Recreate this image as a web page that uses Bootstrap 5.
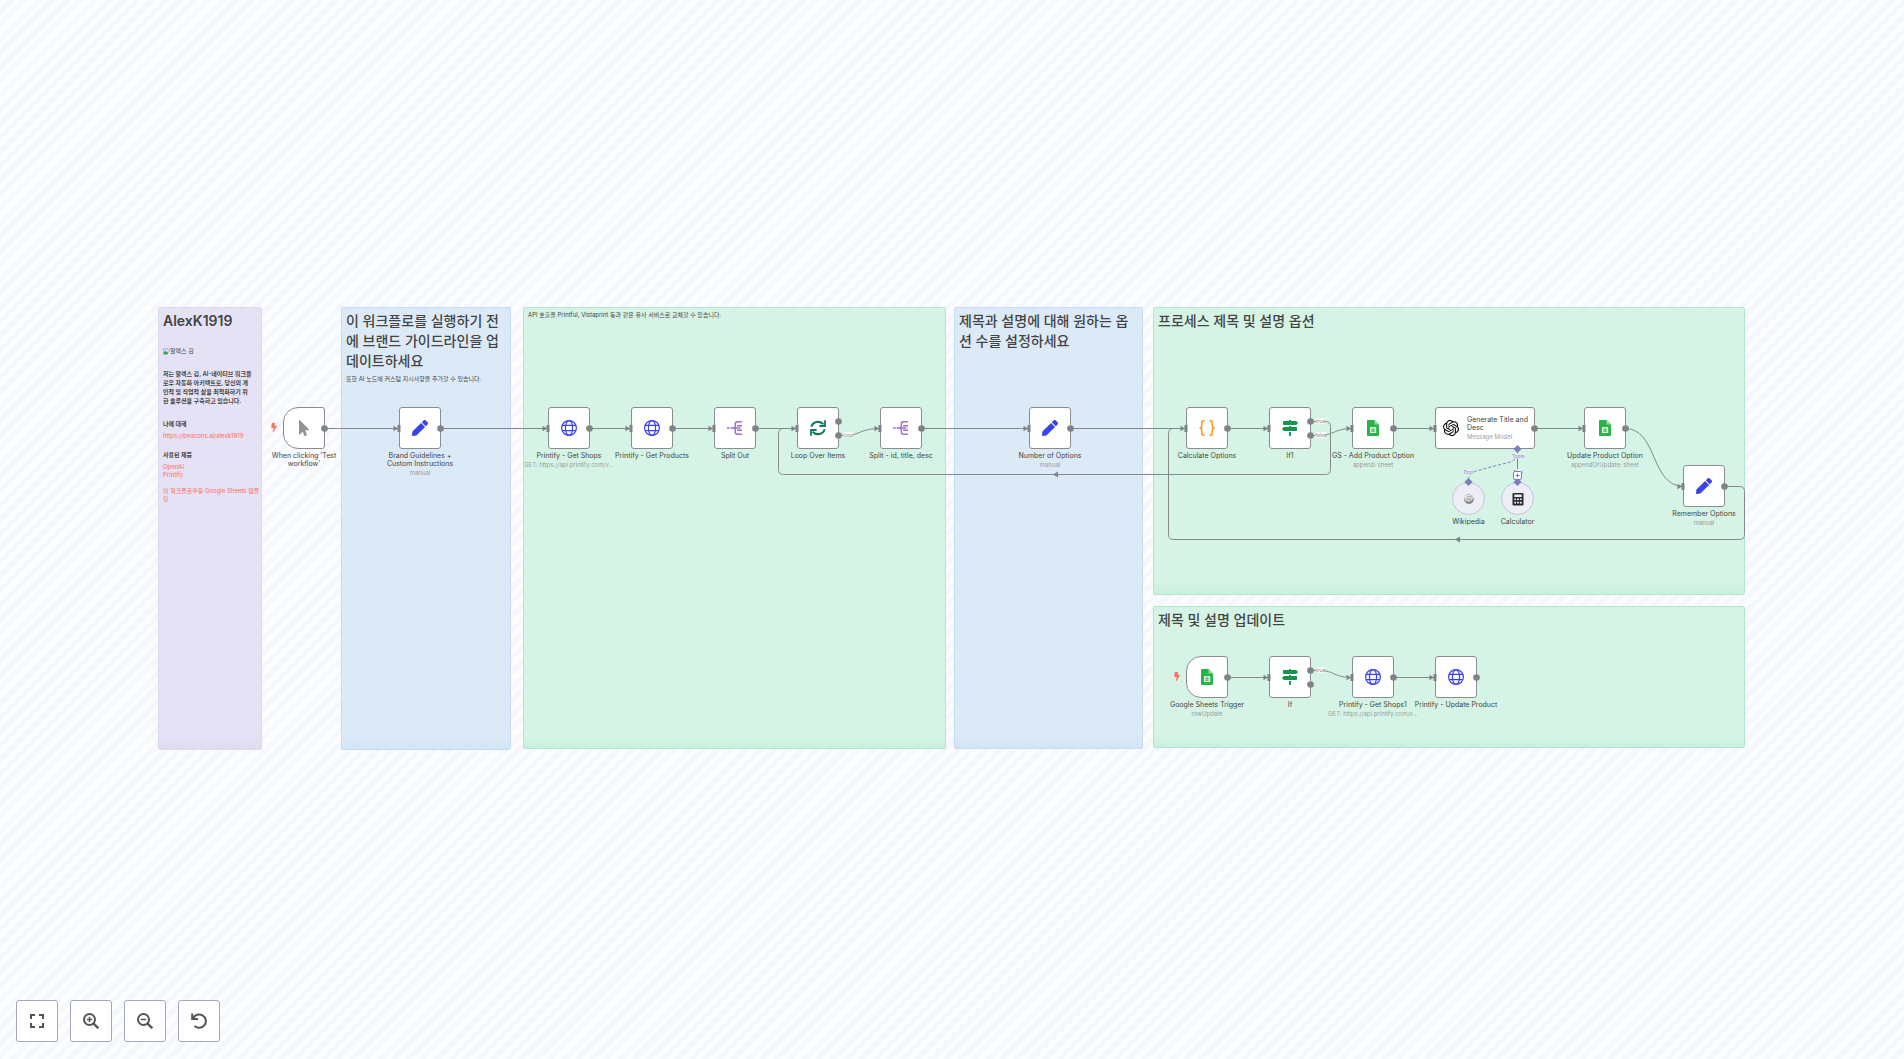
<!DOCTYPE html>
<html lang="ko">
<head>
<meta charset="utf-8">
<meta name="viewport" content="width=device-width, initial-scale=1">
<title>Workflow</title>
<link href="https://cdn.jsdelivr.net/npm/bootstrap@5.3.0/dist/css/bootstrap.min.css" rel="stylesheet">
<style>
body{font-family:Inter,"Noto Sans CJK KR",sans-serif;color:#444;background:repeating-linear-gradient(135deg,#fcfdff 0 5px,#f6f7fc 5px 10px)}
.flow-stage{width:1588px;height:445px}
.flow-wires{inset:0;overflow:visible}
.sticky{border:1px solid;border-radius:2px;padding:3px 4px;word-break:break-all;font-size:6px;line-height:8px}
.sticky-violet{background:linear-gradient(#e5e2f5 calc(100% - 12px),#dfdbf1);border-color:#dcd9f2}
.sticky-blue{background:linear-gradient(#dceaf7 calc(100% - 12px),#d2e4f6);border-color:#c4dcf5}
.sticky-green{background:linear-gradient(#d6f4e5 calc(100% - 12px),#c9f0dc);border-color:#aee8ca}
.sticky h1{font-size:14px;line-height:20px;font-weight:500;margin:0}
.sticky .latin-title{font-weight:600}
.sticky h2{font-size:6px;line-height:9px;font-weight:600;margin:0;white-space:nowrap}
.sticky .about-block{margin-top:14px}
.sticky .product-block{margin-top:10px}
.sticky p{margin:0}
.sticky a{color:#ff6d5a;text-decoration:none;white-space:nowrap}
.flow-node{width:42px}
.node-box{width:42px;height:42px;background:#fff;border:1px solid #8a8c93;border-radius:3px}
.node-start{border-radius:15px 3px 3px 15px}
.node-wide{width:100px;padding-left:7px;gap:8px}
.tool-circle{width:33px;height:33px;border-radius:50%;background:#ededf5;border:1px solid #c3c4dd}
.node-name{font-size:7px;line-height:8px;font-weight:400;margin-top:3px;white-space:nowrap}
.node-sub{font-size:6px;line-height:9px;color:#999da3;white-space:nowrap}
.ic{width:16px;height:16px;display:block}
.bolt{width:6px;height:9px;left:-12px;top:16px;fill:#ff6d5a}
.port-tag{font-size:5px;line-height:5px;color:#888;background:#fff;transform:translate(-50%,-50%)}
.port-tool{color:#7d7fbd;background:#ecf3f5}
.add-tool{width:9px;height:9px;border:1px solid #7d7fbd;border-radius:2px;background:#fff;color:#7d7fbd}
.tool-btn{width:42px;height:42px;background:#fff;border:1px solid #a3a7bb;border-radius:3px}
.tool-btn svg{width:16px;height:16px}
.flow-tools{gap:12px;left:16px;bottom:17px}
</style>
</head>
<body>
<svg width="0" height="0" class="position-absolute" aria-hidden="true">
<symbol id="i-pen" viewBox="0 0 512 512"><path fill="#3a42e9" d="M290.74 93.24l128.02 128.02-277.99 277.99-114.14 12.6C11.35 513.54-1.56 500.62.14 485.34l12.7-114.22 277.9-277.88zm207.2-19.06l-60.11-60.11c-18.75-18.75-49.16-18.75-67.91 0l-56.55 56.55 128.02 128.02 56.55-56.55c18.75-18.76 18.75-49.16 0-67.91z"/></symbol>
<symbol id="i-pointer" viewBox="-96 0 512 512"><path fill="#909298" d="M302.189 329.126H196.105l55.831 135.993c3.889 9.428-.555 19.999-9.444 23.999l-49.165 21.427c-9.165 4-19.443-.571-23.332-9.714l-53.053-129.136-86.664 89.138C18.729 472.71 0 463.554 0 447.977V18.299C0 1.899 19.921-6.096 30.277 5.443l284.412 292.542c11.472 11.179 3.007 31.141-12.5 31.141z"/></symbol>
<symbol id="i-globe" viewBox="0 0 16 16"><g fill="none" stroke="#3a42e9" stroke-width="1.2"><circle cx="8" cy="8" r="7.4"/><ellipse cx="8" cy="8" rx="3.6" ry="7.4"/><path d="M1 5.4h14M1 10.6h14"/></g></symbol>
<symbol id="i-split" viewBox="0 0 16 16"><g fill="none" stroke="#9b6dd5" stroke-width="1.4"><path d="M0 8h2.6M3.6 8H7M15 1.7h-4.5Q8.300 1.700 8.300 4v1.700Q8.300 8 6.500 8Q8.300 8 8.300 10.300V12q0 2.300 2.200 2.300H15M10 5.800h5M10 10.200h5M8 8h5.500"/></g></symbol>
<symbol id="i-sync" viewBox="0 0 16 16"><g fill="none" stroke="#127862" stroke-width="2.100"><path d="M1.300 6.800A7 6.600 0 0 1 13.400 4.200M14.700 9.200A7 6.600 0 0 1 2.600 11.800"/><path d="M15 .3V6H9.400M1 15.700V10H6.600" stroke-width="1.800"/></g></symbol>
<symbol id="i-signs" viewBox="0 0 512 512"><path fill="#159450" d="M507.310 84.690L464 41.370c-6-6-14.140-9.370-22.630-9.370H288V16c0-8.840-7.160-16-16-16h-32c-8.840 0-16 7.160-16 16v16H56c-13.250 0-24 10.750-24 24v80c0 13.250 10.750 24 24 24h385.370c8.490 0 16.620-3.370 22.630-9.370l43.310-43.310c6.250-6.260 6.250-16.380 0-22.630zM224 496c0 8.840 7.160 16 16 16h32c8.840 0 16-7.160 16-16V384h-64v112zm232-272H288v-32h-64v32H70.630c-8.490 0-16.620 3.370-22.630 9.370L4.690 276.690c-6.250 6.250-6.250 16.380 0 22.630L48 342.630c6 6 14.140 9.370 22.630 9.370H456c13.250 0 24-10.750 24-24v-80c0-13.250-10.750-24-24-24z"/></symbol>
<symbol id="i-braces" viewBox="0 0 16 16"><path fill="none" stroke="#ff9922" stroke-width="1.600" d="M5.500.9H4.600Q2.700.9 2.700 2.800V5.800Q2.700 8 .5 8Q2.700 8 2.700 10.200V13.200Q2.700 15.100 4.600 15.100H5.500M10.500.9H11.400Q13.300.9 13.300 2.800V5.800Q13.300 8 15.500 8Q13.300 8 13.300 10.200V13.200Q13.300 15.100 11.400 15.100H10.500"/></symbol>
<symbol id="i-sheet" viewBox="0 0 16 16"><path fill="#28b446" d="M3 0h6.500L14 4.500V15q0 1-1 1H3q-1 0-1-1V1q0-1 1-1z"/><path fill="#8fdc9f" d="M9.500 0L14 4.500H9.500z"/><path fill="#e9f9ec" d="M5 7.200h6.200v5.800H5z"/><path stroke="#28b446" stroke-width=".8" d="M6 9.300h4.200M6 11.200h4.200M8.100 8v4.200"/></symbol>
<symbol id="i-openai" viewBox="0 0 24 24"><path d="M22.2819 9.8211a5.9847 5.9847 0 0 0-.5157-4.9108 6.0462 6.0462 0 0 0-6.5098-2.9A6.0651 6.0651 0 0 0 4.9807 4.1818a5.9847 5.9847 0 0 0-3.9977 2.9 6.0462 6.0462 0 0 0 .7427 7.0966 5.98 5.98 0 0 0 .511 4.9107 6.051 6.051 0 0 0 6.5146 2.9001A5.9847 5.9847 0 0 0 13.2599 24a6.0557 6.0557 0 0 0 5.7718-4.2058 5.9894 5.9894 0 0 0 3.9977-2.9001 6.0557 6.0557 0 0 0-.7475-7.0729zm-9.022 12.6081a4.4755 4.4755 0 0 1-2.8764-1.0408l.1419-.0804 4.7783-2.7582a.7948.7948 0 0 0 .3927-.6813v-6.7369l2.02 1.1686a.071.071 0 0 1 .038.052v5.5826a4.504 4.504 0 0 1-4.4945 4.4944zm-9.6607-4.1254a4.4708 4.4708 0 0 1-.5346-3.0137l.142.0852 4.783 2.7582a.7712.7712 0 0 0 .7806 0l5.8428-3.3685v2.3324a.0804.0804 0 0 1-.0332.0615L9.74 19.9502a4.4992 4.4992 0 0 1-6.1408-1.6464zM2.3408 7.8956a4.485 4.485 0 0 1 2.3655-1.9728V11.6a.7664.7664 0 0 0 .3879.6765l5.8144 3.3543-2.0201 1.1685a.0757.0757 0 0 1-.071 0l-4.8303-2.7865A4.504 4.504 0 0 1 2.3408 7.872zm16.5963 3.8558L13.1038 8.364 15.1192 7.2a.0757.0757 0 0 1 .071 0l4.8303 2.7913a4.4944 4.4944 0 0 1-.6765 8.1042v-5.6772a.79.79 0 0 0-.407-.667zm2.0107-3.0231l-.142-.0852-4.7735-2.7818a.7759.7759 0 0 0-.7854 0L9.409 9.2297V6.8974a.0662.0662 0 0 1 .0284-.0615l4.8303-2.7866a4.4992 4.4992 0 0 1 6.6802 4.66zM8.3065 12.863l-2.02-1.1638a.0804.0804 0 0 1-.038-.0567V6.0742a4.4992 4.4992 0 0 1 7.3757-3.4537l-.142.0805L8.704 5.459a.7948.7948 0 0 0-.3927.6813zm1.0976-2.3654l2.602-1.4998 2.6069 1.4998v2.9994l-2.5974 1.4997-2.6067-1.4997Z"/></symbol>
<symbol id="i-wiki" viewBox="0 0 16 16"><circle cx="8" cy="8" r="5" fill="#d4d4d4"/><path d="M3 7.500Q5 11 8 10.500Q11.500 10 12.500 6Q13.500 9.500 11 12Q8 14 5 12Q3 10 3 7.500z" fill="#8d8d8d"/><path d="M4.500 4.500l2 1.500 1-2.500 2 2.500 1.500-1.500M6 9l2-1.500L10 9" fill="none" stroke="#777" stroke-width=".6"/><path d="M4 6q2-2 5-1.500" fill="none" stroke="#fff" stroke-width=".8"/></symbol>
<symbol id="i-calc" viewBox="0 0 16 16"><rect x="2.500" y="2" width="11" height="12.400" rx="1.200" fill="#2b2b2f"/><path fill="#ededf5" d="M4.300 3.500h7.400v2.500H4.300zM4.300 7.500h1.800V9H4.300zM7.100 7.500h1.800V9H7.100zM9.900 7.500h1.800V9H9.900zM4.300 10.800h1.800v1.700H4.300zM7.100 10.800h1.800v1.700H7.100zM9.900 10.800h1.800v1.700H9.900z"/></symbol>
<symbol id="i-bolt" viewBox="0 0 320 512"><path d="M296 160H180.600l42.600-129.800C227.200 15 215.700 0 200 0H56C44 0 33.800 8.900 32.200 20.800l-32 240C-1.700 275.200 9.500 288 24 288h118.700L96.600 482.500c-3.600 15.200 8 29.500 23.300 29.500 8.400 0 16.400-4.400 20.800-12l176-304c9.300-15.900-2.200-36-20.700-36z"/></symbol>
<symbol id="p-in" viewBox="0 0 8 8" overflow="visible"><path fill="#7f8287" d="M-.5 1.200L4 4L-.5 6.800zM3.500 .5h3v7h-3z"/></symbol>
</svg>

<main class="min-vh-100 d-flex align-items-center justify-content-center overflow-hidden">
<div class="flow-stage position-relative flex-shrink-0">

<section class="sticky sticky-violet position-absolute" style="left:0;top:0;width:104px;height:443px">
<h1 class="latin-title">AlexK1919</h1>
<p class="d-flex align-items-center mt-3"><svg width="7" height="7" viewBox="0 0 16 16" role="img" aria-label="알렉스 김"><path fill="#c5d8f0" stroke="#888" d="M1 1h10l4 4v10H1z"/><path fill="#3fa346" d="M2 14V10l4-3 3 3 2-1 3 5z"/><path fill="#fff" d="M9 16l7-7v7z"/></svg><span>알렉스 김</span></p>
<h2 class="about-block">저는 알렉스 김, AI-네이티브 워크플<br>로우 자동화 아키텍트로, 당신의 개<br>인적 및 직업적 삶을 최적화하기 위<br>한 솔루션을 구축하고 있습니다.</h2>
<h2 class="about-block">나에 대해</h2>
<p class="mt-1"><a href="https://beacons.ai/alexk1919">https://beacons.ai/alexk1919</a></p>
<h2 class="product-block">사용된 제품</h2>
<p class="mt-1"><a href="#">OpenAI</a><br><a href="#">Printify</a></p>
<p class="mt-2"><a href="#">이 워크플로우용 Google Sheets 템플<br>릿</a></p>
</section>
<section class="sticky sticky-blue position-absolute" style="left:183px;top:0;width:170px;height:443px">
<h1>이 워크플로를 실행하기 전에 브랜드 가이드라인을 업데이트하세요</h1>
<p class="mt-1">또한 AI 노드에 커스텀 지시사항을 추가할 수 있습니다.</p>
</section>
<section class="sticky sticky-green position-absolute" style="left:365px;top:0;width:423px;height:442px">
<p>API 호출을 Printful, Vistaprint 등과 같은 유사 서비스로 교체할 수 있습니다.</p>
</section>
<section class="sticky sticky-blue position-absolute" style="left:796px;top:0;width:189px;height:442px">
<h1>제목과 설명에 대해 원하는 옵션 수를 설정하세요</h1>
</section>
<section class="sticky sticky-green position-absolute" style="left:995px;top:0;width:592px;height:288px">
<h1>프로세스 제목 및 설명 옵션</h1>
</section>
<section class="sticky sticky-green position-absolute" style="left:995px;top:299px;width:592px;height:142px">
<h1>제목 및 설명 업데이트</h1>
</section>

<svg class="flow-wires position-absolute" width="1588" height="445" viewBox="0 0 1588 445" aria-hidden="true">
<g fill="none" stroke="#85898d" stroke-width="1">
<path d="M166 121.500H241M282 121.500H390M431 121.500H473M514 121.500H556M597 121.500H639M763 121.500H871M912 121.500H1028M1069 121.500H1111M1235 121.500H1277M1377 121.500H1426"/>
<path d="M680 128.500H686C702 128.500 702 121.500 722 121.500M1152 128.500H1162C1176 128.500 1176 121.500 1194 121.500"/>
<path d="M1152 114.500H1167.500Q1172.500 114.500 1172.500 119.500V162.500Q1172.500 167.500 1167.500 167.500H625.500Q620.500 167.500 620.500 162.500V126.500Q620.500 121.500 625.500 121.500H639"/>
<path d="M1467 121.500C1500 121.500 1492 179.500 1526 179.500"/>
<path d="M1567 179.500H1581.500Q1586.500 179.500 1586.500 184.500V227.500Q1586.500 232.500 1581.500 232.500H1015.500Q1010.500 232.500 1010.500 227.500V126.500Q1010.500 121.500 1015.500 121.500H1028"/>
<path d="M1069 370.500H1111M1235 370.500H1277M1152 363.500H1162C1176 363.500 1176 370.500 1194 370.500"/>
</g>
<g fill="#7f8287"><path d="M900 164.500v6l-5-3zM1302 229.500v6l-5-3z"/></g>
<g fill="none" stroke="#7d7fbd" stroke-width="1"><path stroke-dasharray="3 2" d="M1359.500 143V148Q1359 152 1352 155L1318 164Q1310 167 1310 175"/><path d="M1359.500 143V175"/></g>
</svg>

<div class="flow-node position-absolute" style="left:125px;top:100px"><svg class="bolt position-absolute"><use href="#i-bolt"/></svg><div class="node-box node-start d-flex align-items-center justify-content-center"><svg class="ic"><use href="#i-pointer"/></svg></div><div class="d-flex flex-column align-items-center text-center"><div class="node-name">When clicking ‘Test<br>workflow’</div></div></div>
<div class="flow-node position-absolute" style="left:241px;top:100px"><div class="node-box d-flex align-items-center justify-content-center"><svg class="ic"><use href="#i-pen"/></svg></div><div class="d-flex flex-column align-items-center text-center"><div class="node-name">Brand Guidelines +<br>Custom Instructions</div><div class="node-sub">manual</div></div></div>
<div class="flow-node position-absolute" style="left:390px;top:100px"><div class="node-box d-flex align-items-center justify-content-center"><svg class="ic"><use href="#i-globe"/></svg></div><div class="d-flex flex-column align-items-center text-center"><div class="node-name">Printify - Get Shops</div><div class="node-sub">GET: https://api.printify.com/v...</div></div></div>
<div class="flow-node position-absolute" style="left:473px;top:100px"><div class="node-box d-flex align-items-center justify-content-center"><svg class="ic"><use href="#i-globe"/></svg></div><div class="d-flex flex-column align-items-center text-center"><div class="node-name">Printify - Get Products</div></div></div>
<div class="flow-node position-absolute" style="left:556px;top:100px"><div class="node-box d-flex align-items-center justify-content-center"><svg class="ic"><use href="#i-split"/></svg></div><div class="d-flex flex-column align-items-center text-center"><div class="node-name">Split Out</div></div></div>
<div class="flow-node position-absolute" style="left:639px;top:100px"><div class="node-box d-flex align-items-center justify-content-center"><svg class="ic"><use href="#i-sync"/></svg></div><div class="d-flex flex-column align-items-center text-center"><div class="node-name">Loop Over Items</div></div></div>
<div class="flow-node position-absolute" style="left:722px;top:100px"><div class="node-box d-flex align-items-center justify-content-center"><svg class="ic"><use href="#i-split"/></svg></div><div class="d-flex flex-column align-items-center text-center"><div class="node-name">Split - id, title, desc</div></div></div>
<div class="flow-node position-absolute" style="left:871px;top:100px"><div class="node-box d-flex align-items-center justify-content-center"><svg class="ic"><use href="#i-pen"/></svg></div><div class="d-flex flex-column align-items-center text-center"><div class="node-name">Number of Options</div><div class="node-sub">manual</div></div></div>
<div class="flow-node position-absolute" style="left:1028px;top:100px"><div class="node-box d-flex align-items-center justify-content-center"><svg class="ic"><use href="#i-braces"/></svg></div><div class="d-flex flex-column align-items-center text-center"><div class="node-name">Calculate Options</div></div></div>
<div class="flow-node position-absolute" style="left:1111px;top:100px"><div class="node-box d-flex align-items-center justify-content-center"><svg class="ic"><use href="#i-signs"/></svg></div><div class="d-flex flex-column align-items-center text-center"><div class="node-name">If1</div></div></div>
<div class="flow-node position-absolute" style="left:1194px;top:100px"><div class="node-box d-flex align-items-center justify-content-center"><svg class="ic"><use href="#i-sheet"/></svg></div><div class="d-flex flex-column align-items-center text-center"><div class="node-name">GS - Add Product Option</div><div class="node-sub">append: sheet</div></div></div>
<div class="node-box node-wide position-absolute d-flex align-items-center" style="left:1277px;top:100px"><svg class="ic flex-shrink-0"><use href="#i-openai"/></svg><div><div class="node-name mt-0">Generate Title and<br>Desc</div><div class="node-sub">Message Model</div></div></div>
<div class="flow-node position-absolute" style="left:1426px;top:100px"><div class="node-box d-flex align-items-center justify-content-center"><svg class="ic"><use href="#i-sheet"/></svg></div><div class="d-flex flex-column align-items-center text-center"><div class="node-name">Update Product Option</div><div class="node-sub">appendOrUpdate: sheet</div></div></div>
<div class="flow-node position-absolute" style="left:1525px;top:158px"><div class="node-box d-flex align-items-center justify-content-center"><svg class="ic"><use href="#i-pen"/></svg></div><div class="d-flex flex-column align-items-center text-center"><div class="node-name">Remember Options</div><div class="node-sub">manual</div></div></div>
<div class="flow-node position-absolute" style="left:1028px;top:349px"><svg class="bolt position-absolute"><use href="#i-bolt"/></svg><div class="node-box node-start d-flex align-items-center justify-content-center"><svg class="ic"><use href="#i-sheet"/></svg></div><div class="d-flex flex-column align-items-center text-center"><div class="node-name">Google Sheets Trigger</div><div class="node-sub">rowUpdate</div></div></div>
<div class="flow-node position-absolute" style="left:1111px;top:349px"><div class="node-box d-flex align-items-center justify-content-center"><svg class="ic"><use href="#i-signs"/></svg></div><div class="d-flex flex-column align-items-center text-center"><div class="node-name">If</div></div></div>
<div class="flow-node position-absolute" style="left:1194px;top:349px"><div class="node-box d-flex align-items-center justify-content-center"><svg class="ic"><use href="#i-globe"/></svg></div><div class="d-flex flex-column align-items-center text-center"><div class="node-name">Printify - Get Shops1</div><div class="node-sub">GET: https://api.printify.com/v...</div></div></div>
<div class="flow-node position-absolute" style="left:1277px;top:349px"><div class="node-box d-flex align-items-center justify-content-center"><svg class="ic"><use href="#i-globe"/></svg></div><div class="d-flex flex-column align-items-center text-center"><div class="node-name">Printify - Update Product</div></div></div>
<div class="position-absolute d-flex flex-column align-items-center" style="left:1294px;top:175px;width:33px"><div class="tool-circle d-flex align-items-center justify-content-center"><svg class="ic"><use href="#i-wiki"/></svg></div><div class="node-name">Wikipedia</div></div>
<div class="position-absolute d-flex flex-column align-items-center" style="left:1343px;top:175px;width:33px"><div class="tool-circle d-flex align-items-center justify-content-center"><svg class="ic"><use href="#i-calc"/></svg></div><div class="node-name">Calculator</div></div>

<svg class="flow-wires position-absolute pe-none" width="1588" height="445" viewBox="0 0 1588 445" aria-hidden="true">
<g fill="#7f8287"><circle cx="166.500" cy="121.500" r="3.300"/><circle cx="282.500" cy="121.500" r="3.300"/><circle cx="431.500" cy="121.500" r="3.300"/><circle cx="514.500" cy="121.500" r="3.300"/><circle cx="597.500" cy="121.500" r="3.300"/><circle cx="680.500" cy="114.500" r="3.300"/><circle cx="680.500" cy="128.500" r="3.300"/><circle cx="763.500" cy="121.500" r="3.300"/><circle cx="912.500" cy="121.500" r="3.300"/><circle cx="1069.500" cy="121.500" r="3.300"/><circle cx="1152.500" cy="114.500" r="3.300"/><circle cx="1152.500" cy="128.500" r="3.300"/><circle cx="1235.500" cy="121.500" r="3.300"/><circle cx="1376.500" cy="121.500" r="3.300"/><circle cx="1467.500" cy="121.500" r="3.300"/><circle cx="1566.500" cy="179.500" r="3.300"/><circle cx="1069.500" cy="370.500" r="3.300"/><circle cx="1152.500" cy="363.500" r="3.300"/><circle cx="1152.500" cy="377.500" r="3.300"/><circle cx="1235.500" cy="370.500" r="3.300"/><circle cx="1318.500" cy="370.500" r="3.300"/></g>
<g><use href="#p-in" x="236" y="117.500" width="8" height="8"/><use href="#p-in" x="385" y="117.500" width="8" height="8"/><use href="#p-in" x="468" y="117.500" width="8" height="8"/><use href="#p-in" x="551" y="117.500" width="8" height="8"/><use href="#p-in" x="634" y="117.500" width="8" height="8"/><use href="#p-in" x="717" y="117.500" width="8" height="8"/><use href="#p-in" x="866" y="117.500" width="8" height="8"/><use href="#p-in" x="1023" y="117.500" width="8" height="8"/><use href="#p-in" x="1106" y="117.500" width="8" height="8"/><use href="#p-in" x="1189" y="117.500" width="8" height="8"/><use href="#p-in" x="1272" y="117.500" width="8" height="8"/><use href="#p-in" x="1421" y="117.500" width="8" height="8"/><use href="#p-in" x="1520" y="175.500" width="8" height="8"/><use href="#p-in" x="1106" y="366.500" width="8" height="8"/><use href="#p-in" x="1189" y="366.500" width="8" height="8"/><use href="#p-in" x="1272" y="366.500" width="8" height="8"/></g>
<path fill="#7d7fbd" d="M1359.500 138l4 4-4 4-4-4zM1310.500 171l4 4-4 4-4-4zM1359.500 171l4 4-4 4-4-4z"/>
</svg>
<span class="port-tag position-absolute" style="left:690px;top:128px">loop</span>
<span class="port-tag position-absolute" style="left:1163px;top:114px">true</span>
<span class="port-tag position-absolute" style="left:1163px;top:128px">false</span>
<span class="port-tag position-absolute" style="left:1163px;top:363px">true</span>
<span class="port-tag port-tool position-absolute" style="left:1360px;top:149px">Tools</span>
<span class="port-tag port-tool position-absolute" style="left:1310px;top:165px">Tool</span>
<span class="port-tag port-tool position-absolute" style="left:1360px;top:165px">Tool</span>
<button type="button" class="add-tool position-absolute p-0 d-flex align-items-center justify-content-center" style="left:1355px;top:164px" aria-label="Add tool"><svg width="5" height="5" viewBox="0 0 5 5"><path d="M2.500 .5v4M.5 2.500h4" stroke="#7d7fbd"/></svg></button>
</div>
</main>

<div class="flow-tools position-fixed d-flex">
<button type="button" class="tool-btn p-0 d-flex align-items-center justify-content-center" aria-label="Fit view"><svg viewBox="0 0 16 16"><path fill="none" stroke="#555" stroke-width="2" d="M2 6V2h4M10 2h4v4M14 10v4h-4M6 14H2v-4"/></svg></button>
<button type="button" class="tool-btn p-0 d-flex align-items-center justify-content-center" aria-label="Zoom in"><svg viewBox="0 0 16 16"><g fill="none" stroke="#555" stroke-width="2"><circle cx="6.500" cy="6.500" r="5.500"/><path d="M10.500 10.500l4.800 4.800" stroke-width="2.400"/><path d="M6.500 3.800v5.400M3.800 6.500h5.400" stroke-width="1.500"/></g></svg></button>
<button type="button" class="tool-btn p-0 d-flex align-items-center justify-content-center" aria-label="Zoom out"><svg viewBox="0 0 16 16"><g fill="none" stroke="#555" stroke-width="2"><circle cx="6.500" cy="6.500" r="5.500"/><path d="M10.500 10.500l4.800 4.800" stroke-width="2.400"/><path d="M3.800 6.500h5.400" stroke-width="1.500"/></g></svg></button>
<button type="button" class="tool-btn p-0 d-flex align-items-center justify-content-center" aria-label="Reset zoom"><svg viewBox="0 0 16 16"><path fill="none" stroke="#555" stroke-width="2" d="M1.200 .5V6H7M2 5.500A6.700 6.700 0 1 1 3.500 13"/></svg></button>
</div>
<script src="https://cdn.jsdelivr.net/npm/bootstrap@5.3.0/dist/js/bootstrap.bundle.min.js"></script>
</body>
</html>
